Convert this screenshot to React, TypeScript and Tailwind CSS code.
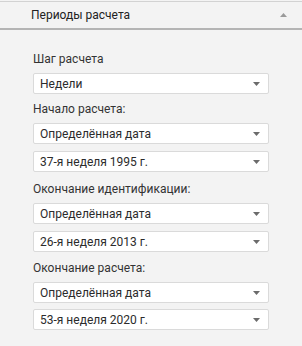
import React from "react";

const font = { fontFamily: 'Roboto, "Noto Sans", sans-serif' };

const Caret = ({ up = false }: { up?: boolean }) => (
  <svg width="7" height="4" viewBox="0 0 7 4" className={up ? "rotate-180" : ""}>
    <path d="M0 0 H7 L3.5 4 Z" fill={up ? "#9a9a9a" : "#6b6b6b"} />
  </svg>
);

const Select = ({ value, className = "" }: { value: string; className?: string }) => (
  <div
    className={`flex h-[21px] items-center justify-between rounded-[2px] border border-[#dadada] bg-white pl-[6px] pr-[8px] text-[12px] text-[#2b2b2b] ${className}`}
  >
    <span className="leading-none">{value}</span>
    <Caret />
  </div>
);

const Label = ({ text, className = "" }: { text: string; className?: string }) => (
  <p className={`h-4 text-[12px] leading-4 text-[#333] ${className}`}>{text}</p>
);

export default function App() {
  return (
    <div className="h-[346px] w-[302px] bg-[#f3f3f3] pt-px" style={font}>
      <div className="flex h-[29px] items-center justify-between border-t border-[#d2d2d2] border-b-2 border-b-[#b4b4b4] pl-[31px] pr-[15px]">
        <span className="text-[12px] text-[#222]">Периоды расчета</span>
        <Caret up />
      </div>
      <div className="pl-[33px] pr-[33px] pt-[21px]">
        <Label text="Шаг расчета" />
        <Select value="Недели" className="mt-[6px]" />
        <Label text="Начало расчета:" className="mt-[7px]" />
        <Select value="Определённая дата" className="mt-[6px]" />
        <Select value="37-я неделя 1995 г." className="mt-[7px]" />
        <Label text="Окончание идентификации:" className="mt-[9px]" />
        <Select value="Определённая дата" className="mt-[6px]" />
        <Select value="26-я неделя 2013 г." className="mt-[7px]" />
        <Label text="Окончание расчета:" className="mt-[8px]" />
        <Select value="Определённая дата" className="mt-[6px]" />
        <Select value="53-я неделя 2020 г." className="mt-[6px]" />
      </div>
    </div>
  );
}
